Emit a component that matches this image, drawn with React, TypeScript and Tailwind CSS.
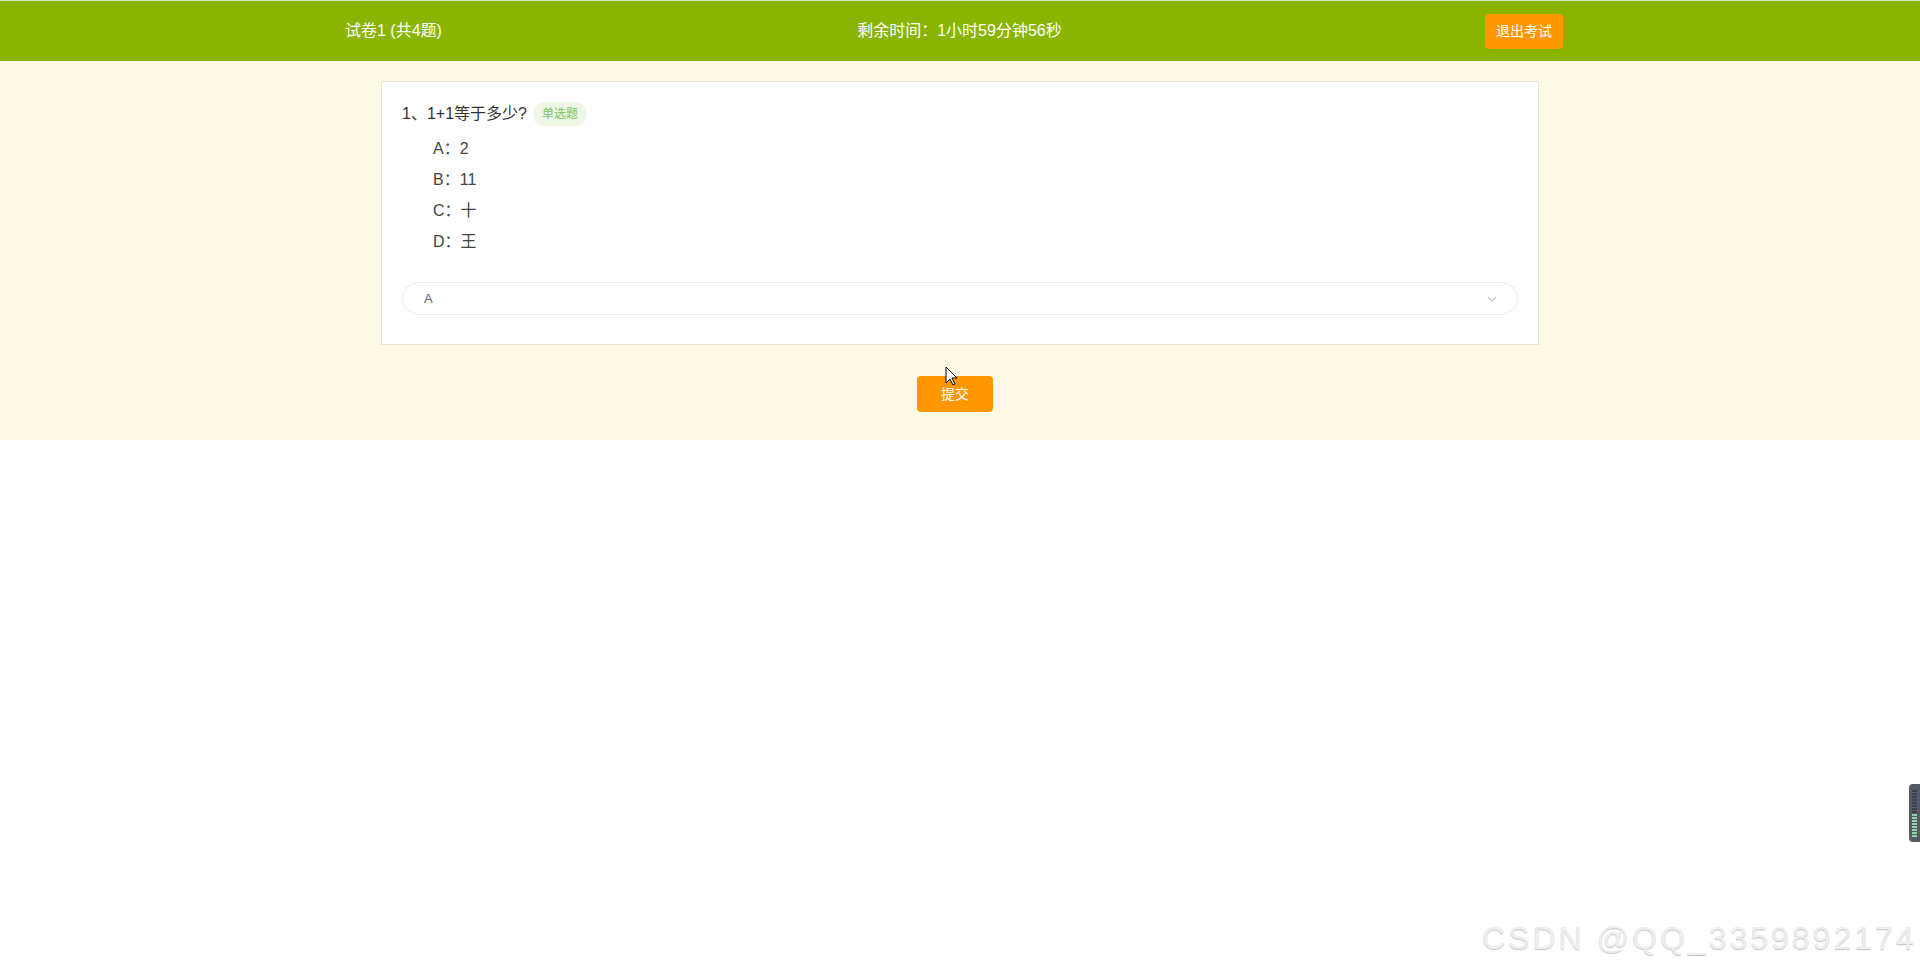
import { useState } from 'react';

const options = [
  { key: 'A', text: '2' },
  { key: 'B', text: '11' },
  { key: 'C', text: '十' },
  { key: 'D', text: '王' },
];

const font = { fontFamily: '"Liberation Sans", "Noto Sans CJK SC", sans-serif' };

const App = () => {
  const [answer] = useState('A');

  return (
    <div className="relative min-h-screen bg-white text-[#333]" style={font}>
      {/* top bar */}
      <div className="h-[61px] border-t border-[#d9e3bd] bg-[#8bb400]">
        <div className="mx-auto flex h-full w-[1230px] items-center justify-between pr-[12px] text-white">
          <p className="text-[16px]">试卷1 (共4题)</p>
          <p className="mr-[8px] text-[16px]">剩余时间：1小时59分钟56秒</p>
          <button className="h-[35px] rounded-[4px] bg-[#ff9800] px-[11px] text-[14px] text-white">
            退出考试
          </button>
        </div>
      </div>

      {/* exam body */}
      <div className="flex flex-col items-center bg-[#fcf9e5] pt-[20px] pb-[28px]">
        <div className="w-[1158px] border border-[#e8e5d6] bg-white px-[20px] pt-[20px] pb-[29px]">
          <div className="flex h-[24px] items-center gap-[6px]">
            <p className="text-[16px] text-[#333]">1、1+1等于多少?</p>
            <span className="flex h-[24px] items-center rounded-full bg-[#eef7e6] px-[9px] text-[12px] text-[#7cc45a]">
              单选题
            </span>
          </div>
          <div className="mt-[7px] ml-[31px] flex flex-col">
            {options.map((o) => (
              <p key={o.key} className="h-[31px] text-[16px] leading-[31px] text-[#444]">
                {o.key}：{o.text}
              </p>
            ))}
          </div>
          <div className="mt-[25px] flex h-[33px] items-center justify-between rounded-full border border-[#ebebeb] pr-[20px] pl-[21px]">
            <span className="text-[13px] text-[#606266]">{answer}</span>
            <svg width="10" height="6" viewBox="0 0 10 6" fill="none">
              <path d="M1 1l4 4 4-4" stroke="#c0c4cc" strokeWidth="1.2" />
            </svg>
          </div>
        </div>
        <button className="mt-[31px] mr-[10px] h-[36px] w-[76px] rounded-[4px] bg-[#ff9800] text-[14px] text-white">
          提交
        </button>
      </div>

      {/* mouse cursor */}
      <svg className="absolute top-[366px] left-[945px]" width="13" height="20" viewBox="0 0 13 20">
        <path d="M1 1v16l4-4 3 6 2-1-3-6h5z" fill="white" stroke="black" strokeWidth="1" />
      </svg>

      {/* side widget */}
      <div className="absolute top-[784px] right-0 flex h-[58px] w-[11px] flex-col items-center gap-[1px] rounded-l-[4px] bg-[#555a64] pt-[6px]">
        {Array.from({ length: 16 }).map((_, i) => (
          <div
            key={i}
            className={i < 8 ? 'h-[2px] w-[5px] bg-[#3c4050]' : 'h-[2px] w-[5px] bg-[#8fd3a8]'}
          />
        ))}
      </div>

      {/* watermark */}
      <p
        className="absolute top-[914px] left-[1482px] text-[32px] tracking-[3px] text-[#eeeeee]"
        style={{ textShadow: '0 1px 1px #c4c4c4' }}
      >
        CSDN @QQ_3359892174
      </p>
    </div>
  );
};

export default App;
